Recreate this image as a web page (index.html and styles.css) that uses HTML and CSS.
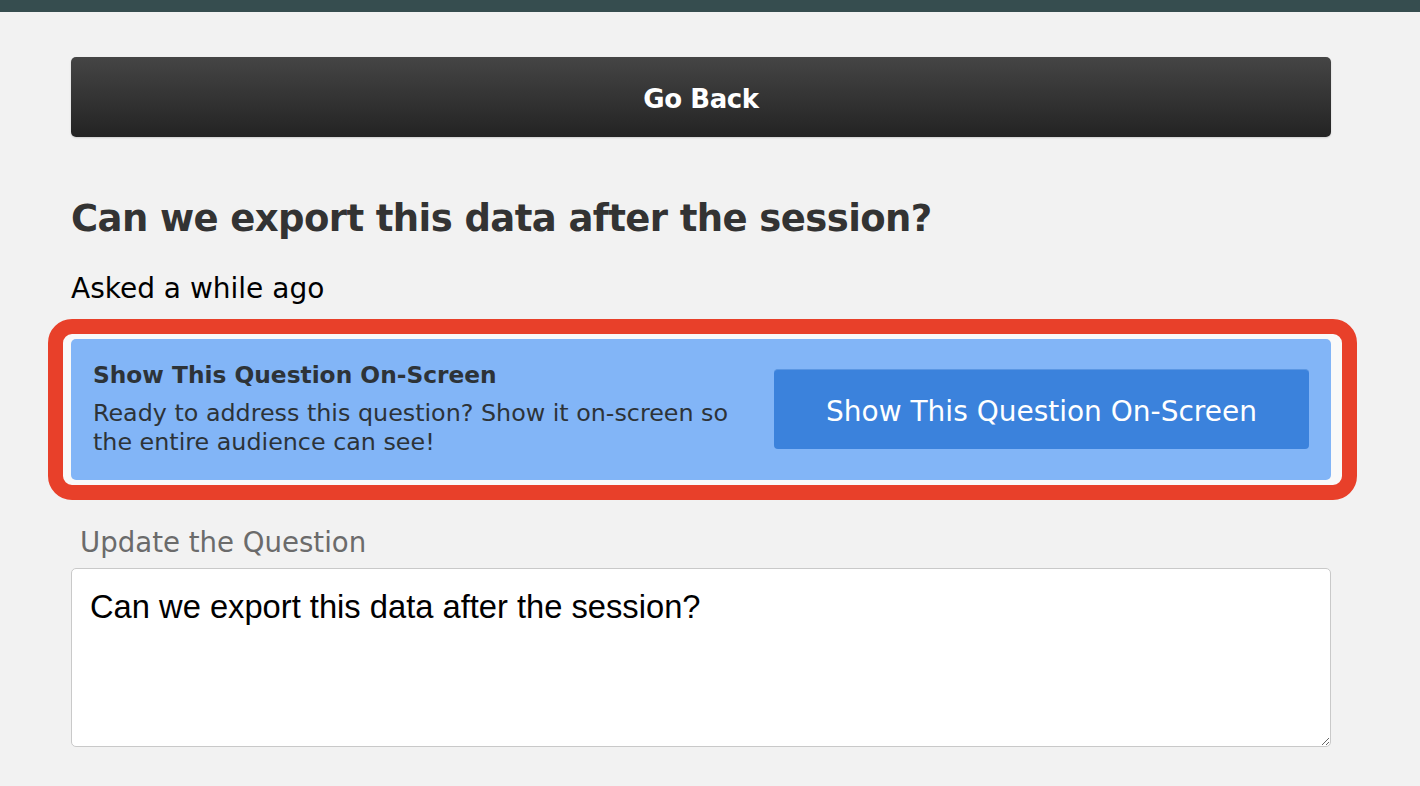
FILE: index.html
```html
<!DOCTYPE html>
<html>
<head>
<meta charset="utf-8">
<link rel="stylesheet" href="styles.css">
</head>
<body>
<div class="topbar"></div>
<main class="page">
  <button class="back-btn">Go Back</button>
  <h1 class="question-title">Can we export this data after the session?</h1>
  <p class="asked">Asked a while ago</p>
  <div class="highlight">
    <div class="show-panel">
      <div class="show-text">
        <div class="show-heading">Show This Question On-Screen</div>
        <div class="show-desc">Ready to address this question? Show it on-screen so the entire audience can see!</div>
      </div>
      <button class="show-btn">Show This Question On-Screen</button>
    </div>
  </div>
  <label class="field-label" for="q">Update the Question</label>
  <textarea id="q" class="question-input">Can we export this data after the session?</textarea>
</main>
</body>
</html>
```
FILE: styles.css
```css
html, body {
  margin: 0;
  padding: 0;
}
body {
  background: #f2f2f2;
  font-family: "DejaVu Sans", "Liberation Sans", sans-serif;
  color: #333;
}
.topbar {
  height: 12px;
  background: #364d4f;
}
.page {
  width: 1260px;
  padding-left: 71px;
  display: flex;
  flex-direction: column;
}
.back-btn {
  margin-top: 45px;
  height: 80px;
  border: none;
  border-radius: 5px;
  background: linear-gradient(#454545, #232323);
  box-shadow: 0 1px 2px rgba(0,0,0,0.15);
  color: #fff;
  font-family: "DejaVu Sans", sans-serif;
  font-weight: bold;
  font-size: 26px;
  letter-spacing: -0.4px;
  padding: 4px 0 0 0;
}
.question-title {
  margin: 58px 0 0 0;
  font-size: 37px;
  letter-spacing: -0.6px;
  line-height: 48px;
  font-weight: bold;
  color: #333;
}
.asked {
  margin: 29px 0 0 0;
  font-size: 28px;
  line-height: 34px;
  color: #000;
}
.highlight {
  margin: 13px -26px 0 -23px;
  border: 15px solid #e8402a;
  border-radius: 24px;
  padding: 5px 11px 5px 8px;
  background: #f9f9f9;
}
.show-panel {
  background: #82b5f7;
  border-radius: 5px;
  padding: 22px 22px 23px 22px;
  display: flex;
  align-items: center;
  gap: 22px;
}
.show-text {
  flex: 1;
  color: #2d3338;
}
.show-heading {
  font-weight: bold;
  font-size: 23.3px;
  line-height: 28px;
}
.show-desc {
  margin-top: 10px;
  font-size: 23.8px;
  line-height: 29px;
}
.show-btn {
  width: 535px;
  height: 80px;
  border: none;
  border-top: 1px solid #5b97e3;
  border-radius: 4px;
  background: #3b82dc;
  color: #fff;
  font-family: "DejaVu Sans", sans-serif;
  font-size: 28px;
  padding: 3px 0 0 0;
  flex-shrink: 0;
}
.field-label {
  margin: 26px 0 0 9px;
  font-size: 27.6px;
  line-height: 34px;
  color: #6b6b6b;
}
.question-input {
  margin-top: 8px;
  height: 179px;
  box-sizing: border-box;
  border: 1px solid #c9c9c9;
  border-radius: 5px;
  background: #fff;
  padding: 19px 18px 18px 18px;
  font-family: "Liberation Sans", Arial, sans-serif;
  font-size: 32.7px;
  line-height: 38px;
  color: #000;
  resize: vertical;
}
```
